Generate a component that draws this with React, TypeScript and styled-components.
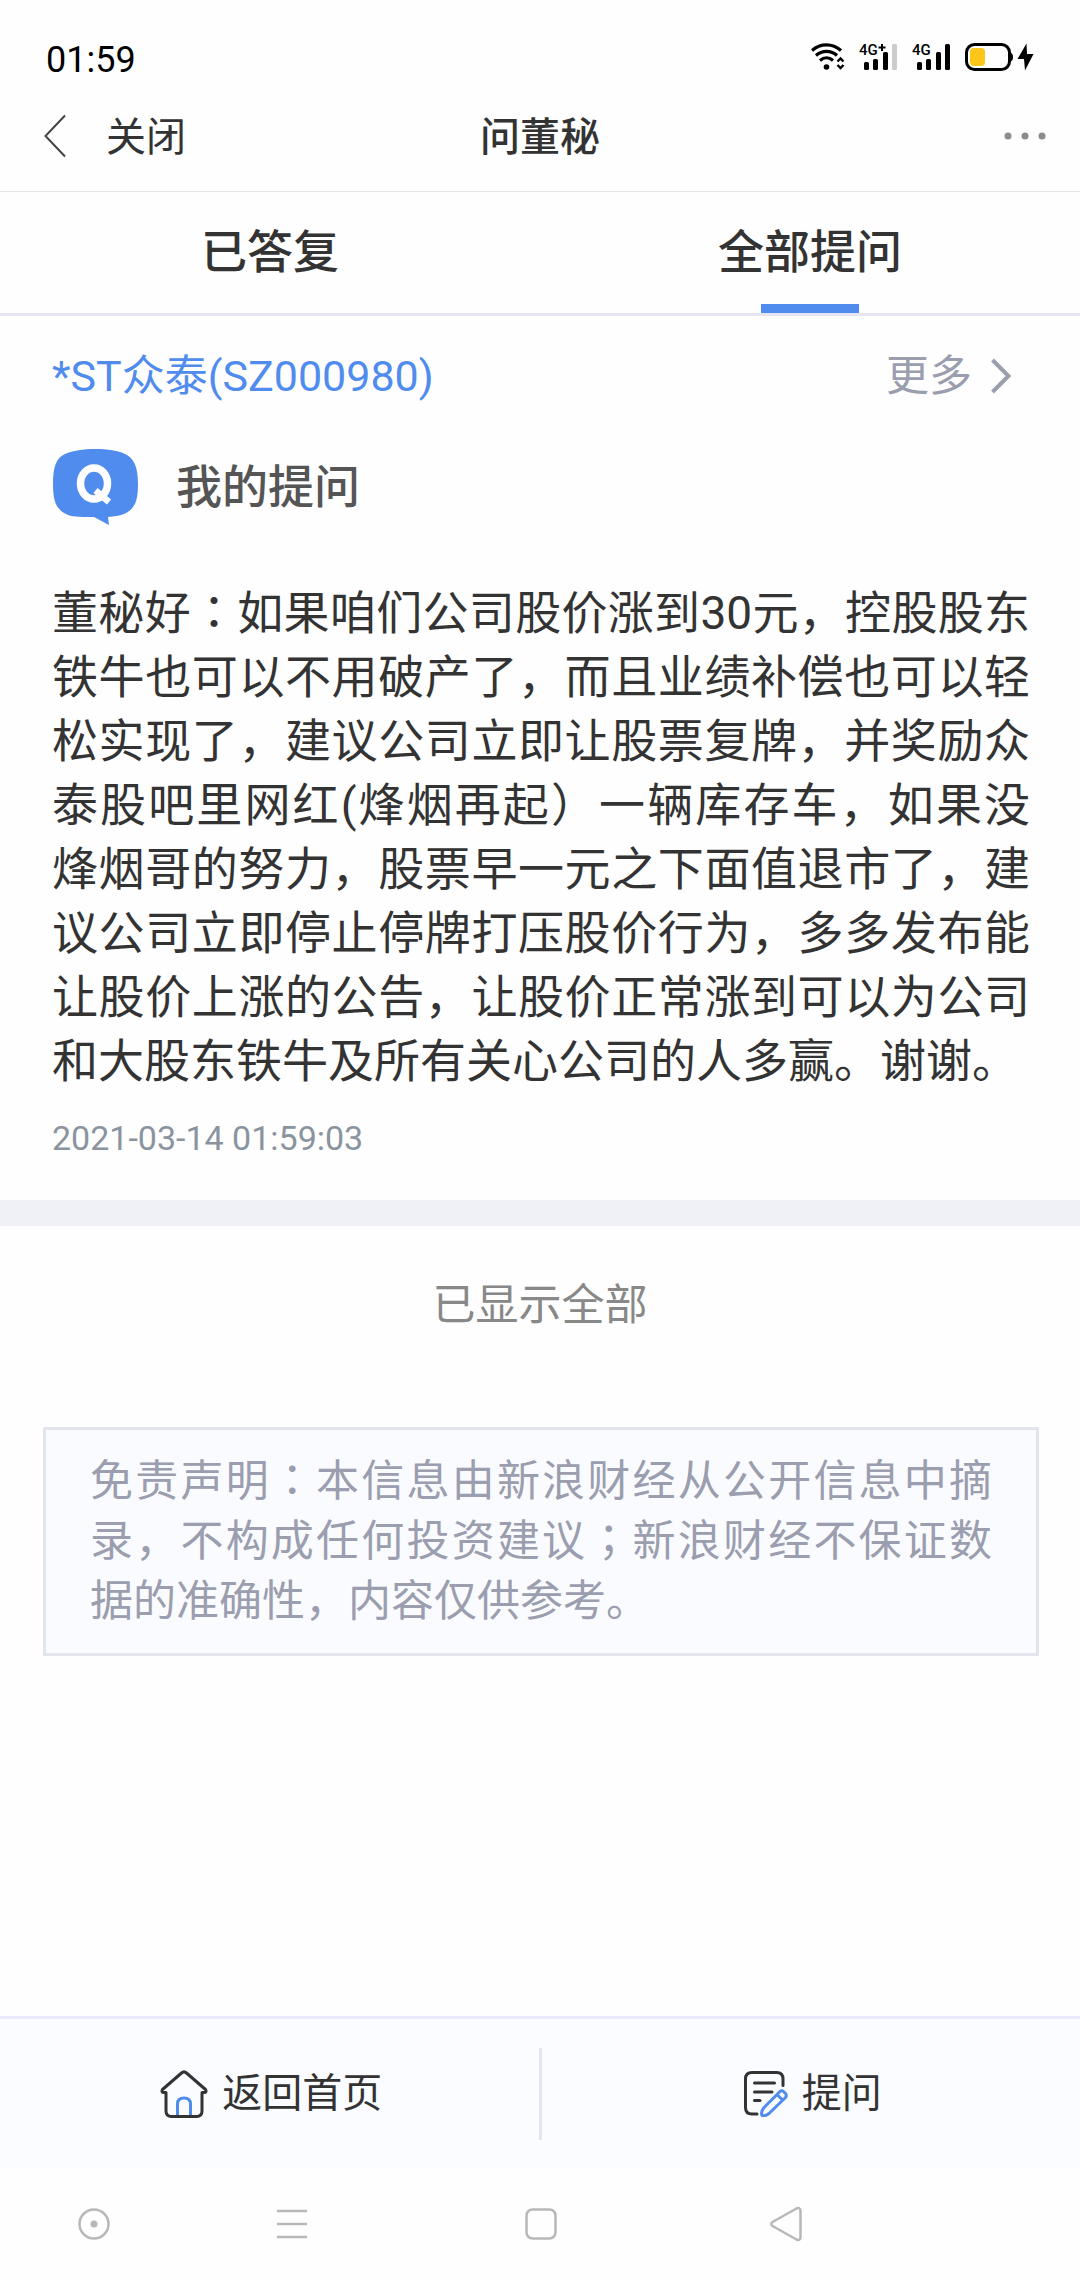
import React from "react";
import styled, { createGlobalStyle } from "styled-components";

const GlobalStyle = createGlobalStyle`
  *, *::before, *::after { box-sizing: border-box; }
  body {
    margin: 0;
    background: #fefefe;
    color: #333;
    font-family: Roboto, "Noto Sans CJK SC", sans-serif;
  }
  h1, h2, p { margin: 0; font-weight: 400; }
  button { border: 0; padding: 0; background: none; font: inherit; color: inherit; cursor: pointer; }
  a { color: inherit; text-decoration: none; }
  svg { display: block; flex: none; }
`;

const Screen = styled.div`
  display: flex;
  flex-direction: column;
  min-height: 100vh;
`;

const StatusBar = styled.div`
  display: flex;
  align-items: center;
  justify-content: space-between;
  height: 80px;
  padding: 34px 46px 0;
  color: #000;
`;

const Clock = styled.time`
  padding-top: 6px;
  font-size: 36px;
  line-height: 44px;
`;

const StatusIcons = styled.div`
  display: flex;
  align-items: center;
  gap: 14px;
`;

const Battery = styled.div`
  display: flex;
  align-items: center;
  gap: 4px;
`;

const TitleBar = styled.header`
  display: grid;
  grid-template-columns: 1fr auto 1fr;
  align-items: center;
  height: 112px;
  padding: 0 34px;
  border-bottom: 1px solid #e6e6e6;
  font-size: 40px;
  line-height: 60px;
`;

const CloseGroup = styled.div`
  display: flex;
  align-items: center;
  gap: 40px;
  padding-left: 10px;
`;

const CloseButton = styled.button`
  padding-top: 4px;
`;

const Title = styled.h1`
  padding-top: 4px;
  font-size: 40px;
  font-weight: 500;
`;

const MenuButton = styled.button`
  justify-self: end;
`;

const Tabs = styled.div`
  display: grid;
  grid-template-columns: 1fr 1fr;
  height: 124px;
  border-bottom: 3px solid #e6e6f2;
`;

const Tab = styled.button<{ $active?: boolean }>`
  display: flex;
  flex-direction: column;
  align-items: center;
  justify-content: space-between;
  padding-top: 27px;
  font-size: 46px;
  font-weight: 500;
  line-height: 66px;

  &::after {
    content: "";
    width: 98px;
    height: 9px;
    background: ${(p) => (p.$active ? "#508cee" : "transparent")};
  }
`;

const Question = styled.article`
  padding: 0 50px 40px 52px;
  border-bottom: 26px solid #f0f1f6;
`;

const StockRow = styled.div`
  display: flex;
  align-items: center;
  justify-content: space-between;
  height: 120px;
  padding-right: 18px;
  font-size: 43px;
  line-height: 60px;
`;

const StockLink = styled.a`
  color: #508cee;
`;

const MoreLink = styled.a`
  display: flex;
  align-items: center;
  gap: 18px;
  color: #9a9eae;
`;

const Asker = styled.div`
  display: flex;
  align-items: center;
  gap: 36px;
  height: 102px;
`;

const AskerName = styled.h2`
  font-size: 46px;
  font-weight: 500;
  line-height: 66px;
  color: #555;
`;

const QuestionText = styled.p`
  padding-top: 43px;
  font-size: 46px;
  line-height: 64px;
  text-align: justify;
`;

/* Full-width colon and semicolon, drawn in the middle of their square. */
const Mark = styled.span`
  font-family: Roboto, "Noto Sans CJK TC", sans-serif;
`;

const Posted = styled.time`
  display: block;
  padding-top: 23px;
  font-size: 34px;
  line-height: 44px;
  color: #8a949e;
`;

const EndNote = styled.p`
  padding: 47px 0 90px;
  font-size: 43px;
  line-height: 64px;
  text-align: center;
  color: #888;
`;

const Disclaimer = styled.p`
  margin: 0 41px 0 43px;
  padding: 21px 44px 22px;
  border: 3px solid #e3e5ed;
  background: #fafbff;
  font-size: 43px;
  line-height: 60px;
  text-align: justify;
  color: #9a9eae;
`;

const ActionBar = styled.nav`
  display: flex;
  align-items: center;
  height: 152px;
  margin-top: auto;
  border-top: 3px solid #e9eaf9;
  background: #fafcff;
`;

const Action = styled.a`
  display: flex;
  flex: 1;
  align-items: center;
  justify-content: center;
  gap: 14px;
  padding-left: 4px;
  font-size: 40px;
  line-height: 60px;

  & + & { border-left: 3px solid #e4e5ef; }
`;

const ActionLabel = styled.span`
  padding: 16px 0;
`;

const SystemNav = styled.nav`
  display: grid;
  grid-template-columns: 147fr 249fr 249fr 241fr 174fr;
  align-items: center;
  height: 112px;
  padding-left: 20px;
`;

const SystemButton = styled.button`
  justify-self: center;
`;

const WifiIcon = () => (
  <svg width="34" height="28" viewBox="0 0 34 28" fill="none" stroke="#000" strokeWidth="3.2" aria-hidden="true">
    <path d="M1 7.5C9.5 0 21.500 0 30 7.500" />
    <path d="M5 12.500C11 7 20 7 26 12.500" />
    <path d="M9 17.500C13 14 18 14 22 17.500" />
    <circle cx="15.500" cy="24" r="2.800" fill="#000" stroke="none" />
    <path d="M26.500 18.500L29.500 15.500L32.500 18.500M26.500 22L29.500 25L32.500 22" strokeWidth="2.400" />
  </svg>
);

const SignalIcon = ({ plus, weak }: { plus?: boolean; weak?: boolean }) => (
  <svg width="39" height="36" viewBox="0 -4 39 36" role="img" aria-label="移动网络信号">
    <text x="0" y="12" fontFamily="Roboto, sans-serif" fontSize="15" fontWeight="500">4G</text>
    {plus && <path d="M23 1V8M19.500 4.500H26.500" stroke="#000" strokeWidth="2" />}
    <rect x="5" y="19" width="5" height="8" rx="1.500" />
    <rect x="14" y="16" width="5" height="11" rx="1.500" />
    <rect x="24" y="9" width="5" height="18" rx="1.500" />
    <rect x="33" y="1" width="5" height="26" rx="1.500" fill={weak ? "#ccc" : "#000"} />
  </svg>
);

const BatteryIcon = () => (
  <svg width="48" height="28" viewBox="0 0 48 28" aria-hidden="true">
    <rect x="1.500" y="1.500" width="43" height="25" rx="8" fill="none" stroke="#000" strokeWidth="3" />
    <path d="M45 9.500Q48 10 48 14T45 18.500Z" />
    <rect x="5" y="5" width="15" height="18" rx="4" fill="#ffc61a" />
  </svg>
);

const BoltIcon = () => (
  <svg width="17" height="28" viewBox="0 0 17 28" aria-hidden="true">
    <path d="M9.500 0.500L0.500 16H7L8 27.500L16.500 11H10Z" />
  </svg>
);

const BackIcon = () => (
  <svg width="22" height="44" viewBox="0 0 22 44" fill="none" stroke="#444" strokeWidth="2" aria-hidden="true">
    <path d="M21 1.500L1.500 22L21 42.500" />
  </svg>
);

const DotsIcon = () => (
  <svg width="42" height="8" viewBox="0 0 42 8" fill="#8c8c8c" aria-hidden="true">
    <circle cx="4" cy="4" r="3.500" />
    <circle cx="21" cy="4" r="3.500" />
    <circle cx="38" cy="4" r="3.500" />
  </svg>
);

const ChevronIcon = () => (
  <svg width="22" height="36" viewBox="0 0 22 36" fill="none" stroke="#9a9eae" strokeWidth="4" aria-hidden="true">
    <path d="M2.500 2L18.500 18L2.500 34" />
  </svg>
);

const BubbleIcon = () => (
  <svg width="88" height="76" viewBox="0 0 88 76" role="img" aria-label="Q">
    <path
      d="M43 0C56 0 66 1.500 73 5C82 9 86 18 86 35C86 52 83 60 72 65C67 67 62 67.500 56 68L57 76L42 68C31 68 22 68 16 66C4 61 1 52 1 35C1 18 4 9 13 5C21 1.500 31 0 43 0Z"
      fill="#508cee"
    />
    <ellipse cx="42" cy="34.500" rx="13.500" ry="15.500" fill="none" stroke="#fff" strokeWidth="7.500" />
    <path d="M43.500 41.500L57 53" stroke="#fff" strokeWidth="6.500" />
  </svg>
);

const HomeIcon = () => (
  <svg width="48" height="48" viewBox="0 0 48 48" fill="none" strokeWidth="3" strokeLinejoin="round" strokeLinecap="round" aria-hidden="true">
    <path d="M17.500 45V34Q17.500 28 24 28T30.500 34V45" stroke="#508cee" />
    <path d="M21.500 3Q24 0.800 26.500 3L45.500 19.500Q47 22.500 44 22.500H42V41Q42 46.500 36.500 46.500H11.500Q6 46.500 6 41V22.500H4Q1 22.500 2.500 19.500Z" stroke="#333" />
  </svg>
);

const AskIcon = () => (
  <svg width="44" height="46" viewBox="0 0 44 46" fill="none" strokeWidth="3" strokeLinejoin="round" strokeLinecap="round" aria-hidden="true">
    <path d="M39 14.500V8Q39 1.500 32.500 1.500H8Q1.500 1.500 1.500 8V36.500Q1.500 43 8 43H13M10.500 12H30.500M10.500 21H28M10.500 29.500H16" stroke="#333" />
    <path d="M36 20.500Q38 19 39.500 20.500L41.500 22.500Q43 24.500 41.500 26.500L25 42.500Q21 45.500 18 44.500Q16.500 41 20 36.500ZM33 23.500L38.500 29" stroke="#508cee" />
  </svg>
);

export default function App() {
  return (
    <Screen>
      <GlobalStyle />
      <StatusBar>
        <Clock>01:59</Clock>
        <StatusIcons>
          <WifiIcon />
          <SignalIcon plus weak />
          <SignalIcon />
          <Battery>
            <BatteryIcon />
            <BoltIcon />
          </Battery>
        </StatusIcons>
      </StatusBar>

      <TitleBar>
        <CloseGroup>
          <button type="button" aria-label="返回"><BackIcon /></button>
          <CloseButton type="button">关闭</CloseButton>
        </CloseGroup>
        <Title>问董秘</Title>
        <MenuButton type="button" aria-label="菜单"><DotsIcon /></MenuButton>
      </TitleBar>

      <Tabs role="tablist">
        <Tab type="button" role="tab" aria-selected={false}>已答复</Tab>
        <Tab type="button" role="tab" aria-selected $active>全部提问</Tab>
      </Tabs>

      <main>
        <Question>
          <StockRow>
            <StockLink href="#stock">*ST众泰(SZ000980)</StockLink>
            <MoreLink href="#more">更多<ChevronIcon /></MoreLink>
          </StockRow>
          <Asker>
            <BubbleIcon />
            <AskerName>我的提问</AskerName>
          </Asker>
          <QuestionText>
            董秘好<Mark>：</Mark>如果咱们公司股价涨到30元，控股股东铁牛也可以不用破产了，而且业绩补偿也可以轻松实现了，建议公司立即让股票复牌，并奖励众泰股吧里网红(烽烟再起）一辆库存车，如果没烽烟哥的努力，股票早一元之下面值退市了，建议公司立即停止停牌打压股价行为，多多发布能让股价上涨的公告，让股价正常涨到可以为公司和大股东铁牛及所有关心公司的人多赢。谢谢。
          </QuestionText>
          <Posted dateTime="2021-03-14T01:59:03">2021-03-14 01:59:03</Posted>
        </Question>
        <EndNote>已显示全部</EndNote>
        <Disclaimer>
          免责声明<Mark>：</Mark>本信息由新浪财经从公开信息中摘录，不构成任何投资建议<Mark>；</Mark>新浪财经不保证数据的准确性，内容仅供参考。
        </Disclaimer>
      </main>

      <ActionBar>
        <Action href="#home"><HomeIcon /><ActionLabel>返回首页</ActionLabel></Action>
        <Action href="#ask"><AskIcon /><ActionLabel>提问</ActionLabel></Action>
      </ActionBar>

      <SystemNav>
        <SystemButton type="button" aria-label="助手">
          <svg width="34" height="34" viewBox="0 0 34 34" fill="none" stroke="#b8b8b8" strokeWidth="2.500">
            <circle cx="17" cy="17" r="14.500" />
            <circle cx="17" cy="17" r="3.500" fill="#b8b8b8" stroke="none" />
          </svg>
        </SystemButton>
        <SystemButton type="button" aria-label="任务">
          <svg width="34" height="34" viewBox="0 0 34 34" stroke="#b8b8b8" strokeWidth="2.500">
            <path d="M2 4H32M2 17H32M2 30H32" />
          </svg>
        </SystemButton>
        <SystemButton type="button" aria-label="主页">
          <svg width="34" height="34" viewBox="0 0 34 34" fill="none" stroke="#b8b8b8" strokeWidth="2.500">
            <rect x="2.500" y="2.500" width="29" height="29" rx="6" />
          </svg>
        </SystemButton>
        <SystemButton type="button" aria-label="后退">
          <svg width="34" height="36" viewBox="0 0 34 36" fill="none" stroke="#b8b8b8" strokeWidth="2.500" strokeLinejoin="round">
            <path d="M27.500 2.500Q31 1 31.500 4.500V31.500Q31 35 27.500 33.500L3.500 20Q1 18 3.500 16Z" />
          </svg>
        </SystemButton>
      </SystemNav>
    </Screen>
  );
}
